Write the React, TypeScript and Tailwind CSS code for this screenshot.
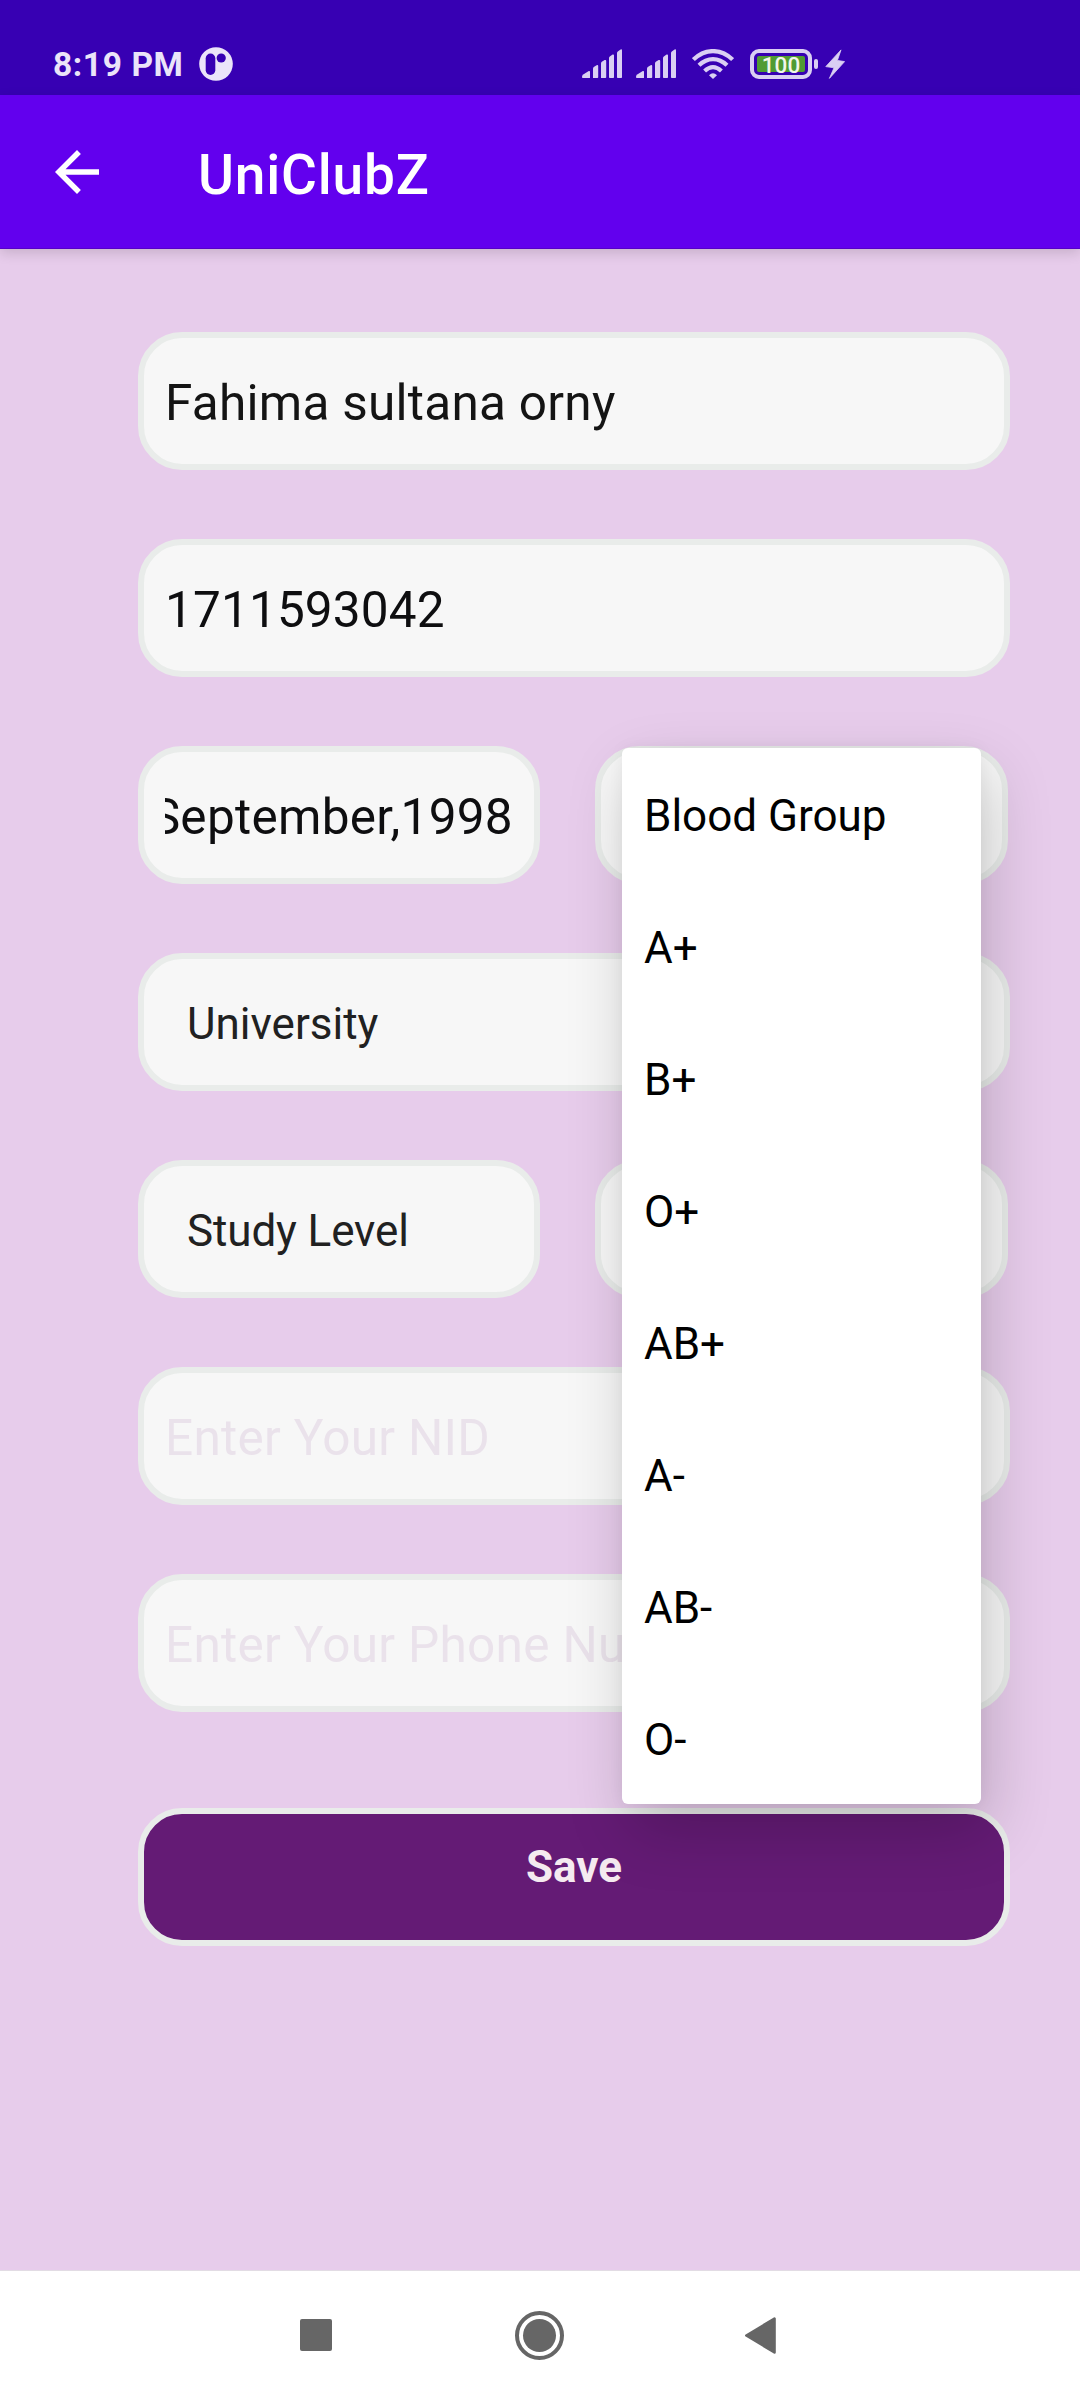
import type { ReactNode } from "react";

const bloodGroups = ["Blood Group", "A+", "B+", "O+", "AB+", "A-", "AB-", "O-"];

function SignalIcon() {
  return (
    <svg className="h-[30px] w-[40px]" viewBox="0 0 40 30" fill="#dacff3">
      <path d="M0 28 Q0 26.4 1.2 25.6L6.8 22Q8 21.6 8 22.6V28.4Q8 29 7.4 29H0.8Q0 29 0 28Z" />
      <path d="M11 29V19.5Q11 18.6 11.8 18L14.6 16.3Q16.2 15.6 16.2 17V28.2Q16.2 29 15.4 29Z" />
      <path d="M19 29V14.2Q19 13.4 19.8 12.8L22.6 11.1Q24.2 10.4 24.2 12V28.2Q24.2 29 23.4 29Z" />
      <path d="M27 28.2V9Q27 8 27.8 7.4L30.6 5.6Q32 5 32 6.4V28.2Q32 29 31.2 29H27.8Q27 29 27 28.2Z" />
      <path d="M35 28.2V4Q35 3 35.8 2.4L38.6 0.4Q40 -0.2 40 1.2V28.2Q40 29 39.2 29H35.8Q35 29 35 28.2Z" />
    </svg>
  );
}

function WifiIcon() {
  return (
    <svg className="h-[30px] w-[42px]" viewBox="0 0 42 30" fill="none" stroke="#dacff3" strokeWidth="4.2">
      <path d="M1.4 10.6C13 -0.8 29 -0.8 40.6 10.6" />
      <path d="M7 16.2C15.5 8 26.5 8 35 16.2" />
      <path d="M12.6 22C18 17 24 17 29.4 22" />
      <path d="M21 30L17 26.3Q21 22 25 26.3Z" fill="#dacff3" stroke="none" />
    </svg>
  );
}

function StatusBar() {
  return (
    <header className="flex h-[95px] bg-[#3700b3] pt-[46px] pl-[53px]">
      <div className="flex h-[36px] w-[529px] items-center">
        <span className="w-[146px] pt-[2px] text-[33.5px] leading-[36px] font-bold tracking-[0.6px] whitespace-nowrap text-[#ebe4f9]">
          8:19 PM
        </span>
        <svg className="h-[34px] w-[34px]" viewBox="0 0 34 34">
          <circle cx="17" cy="17" r="16.8" fill="#ebe4f9" />
          <rect x="6.7" y="6.5" width="9.6" height="21.5" rx="4.8" fill="#3700b3" />
          <circle cx="22.2" cy="11" r="4.6" fill="#3700b3" />
        </svg>
      </div>
      <div className="flex h-[36px] items-center">
        <SignalIcon />
        <div className="w-[14px]" />
        <SignalIcon />
        <div className="w-[16px]" />
        <WifiIcon />
        <div className="ml-[16px] h-[30px] w-[62px] rounded-[9px] border-4 border-[#dacff3] p-[3px]">
          <div className="flex h-[16px] items-center justify-center rounded-[2px] bg-[#509b33] text-[22.5px] leading-[16px] font-medium text-[#f3f6ea]">
            <span className="pt-[2px]">100</span>
          </div>
        </div>
        <div className="ml-[2px] h-[10px] w-[4px] rounded-[2px] bg-[#dacff3]" />
        <svg className="ml-[7px] h-[30px] w-[20px]" viewBox="0 0 20 30" fill="#dacff3" stroke="#dacff3" strokeWidth="0.8" strokeLinejoin="round">
          <path d="M16 0.9L0.8 17.6L9 18.8L4.4 29.4L19.6 12.6L12.4 11.4Z" />
        </svg>
      </div>
    </header>
  );
}

function Field({ children, className = "" }: { children?: ReactNode; className?: string }) {
  return (
    <div className={`h-[138px] overflow-hidden rounded-[44px] border-[6px] border-[#e9ecea] bg-[#f7f7f7] ${className}`}>
      <div className="flex h-full items-center">{children}</div>
    </div>
  );
}

function InputText({ children, className = "" }: { children: ReactNode; className?: string }) {
  return <div className={`mx-[21px] flex-1 pt-[4px] text-[49.5px] leading-[64px] whitespace-nowrap ${className}`}>{children}</div>;
}

function SpinnerText({ children, className = "" }: { children: ReactNode; className?: string }) {
  return (
    <div className={`pt-[4px] pl-[43px] text-[44px] leading-[60px] whitespace-nowrap text-[#212121] ${className}`}>{children}</div>
  );
}

export default function App() {
  return (
    <div className="relative flex h-[2400px] w-[1080px] flex-col overflow-hidden bg-[#e7cceb] font-[Roboto,sans-serif]">
      <StatusBar />

      <div className="flex h-[154px] items-center border-b border-[#5600c8] bg-[#6200ee] pl-[44px] shadow-[0_4px_12px_rgba(0,0,0,0.14)]">
        <svg className="h-[66px] w-[66px]" viewBox="0 0 24 24" fill="#fff">
          <path d="M20 11H7.83l5.59-5.59L12 4l-8 8 8 8 1.41-1.41L7.83 13H20v-2z" />
        </svg>
        <h1 className="pt-[6px] pl-[88px] text-[55px] leading-[66px] font-medium tracking-[0.8px] text-white">UniClubZ</h1>
      </div>

      <main className="flex flex-1 flex-col gap-[69px] pt-[83px] pl-[138px]">
        <Field className="w-[872px]">
          <InputText className="tracking-[0.26px] text-[#141414]">Fahima sultana orny</InputText>
        </Field>
        <Field className="w-[872px]">
          <InputText className="tracking-[0.15px] text-[#0e0e10]">1711593042</InputText>
        </Field>
        <div className="flex gap-[55px]">
          <Field className="w-[402px]">
            <InputText className="flex justify-end overflow-hidden tracking-[0.3px] text-[#0e0e10]">
              <span>September,1998</span>
            </InputText>
          </Field>
          <Field className="w-[413px]" />
        </div>
        <Field className="w-[872px]">
          <SpinnerText>University</SpinnerText>
        </Field>
        <div className="flex gap-[55px]">
          <Field className="w-[402px]">
            <SpinnerText className="tracking-[-0.12px]">Study Level</SpinnerText>
          </Field>
          <Field className="w-[413px]" />
        </div>
        <Field className="w-[872px]">
          <InputText className="tracking-[0.3px] text-[#eae2eb]">Enter Your NID</InputText>
        </Field>
        <Field className="w-[872px]">
          <InputText className="tracking-[0.3px] text-[#eae2eb]">Enter Your Phone Number</InputText>
        </Field>
        <button className="mt-[27px] h-[138px] w-[872px] rounded-[44px] border-[6px] border-[#e9ecea] bg-[#641b75] pb-[20px] text-[44px] leading-[60px] font-bold text-[#f5eaf0]">
          Save
        </button>
      </main>

      <nav className="flex h-[130px] items-start border-t border-[#e2dce4] bg-white pt-[40px] pl-[300px]">
        <div className="mt-[8px] h-[32px] w-[32px] rounded-[2px] bg-[#666]" />
        <svg className="ml-[183px] h-[50px] w-[50px]" viewBox="0 0 50 50">
          <circle cx="24.5" cy="24.5" r="22.5" fill="none" stroke="#666" strokeWidth="4" />
          <circle cx="24.5" cy="24.5" r="16.5" fill="#666" />
        </svg>
        <svg className="mt-[6px] ml-[180px] h-[37px] w-[32px]" viewBox="0 0 32 37">
          <path d="M1.3 18.5L29.5 1.6V35.4Z" fill="#666" stroke="#666" strokeWidth="2.6" strokeLinejoin="round" />
        </svg>
      </nav>

      <ul className="absolute top-[748px] left-[622px] w-[359px] rounded-[6px] bg-white shadow-[8px_26px_64px_rgba(0,0,0,0.19),0_0_16px_rgba(0,0,0,0.05)]">
        {bloodGroups.map((group) => (
          <li key={group} className="flex h-[132px] items-center pt-[4px] pl-[22px] text-[44px] leading-[60px] text-black">
            {group}
          </li>
        ))}
      </ul>
    </div>
  );
}
